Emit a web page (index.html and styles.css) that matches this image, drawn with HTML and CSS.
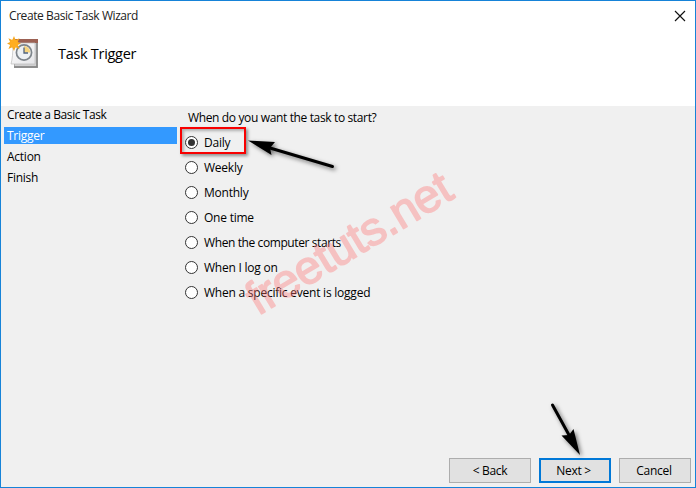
FILE: index.html
```html
<!DOCTYPE html>
<html lang="en">
<head>
<meta charset="utf-8">
<title>Create Basic Task Wizard</title>
<link rel="stylesheet" href="styles.css">
</head>
<body>
<main class="window">
  <header class="header">
    <div class="titlebar">
      <span class="caption">Create Basic Task Wizard</span>
      <svg class="close" width="12" height="12" viewBox="0 0 12 12"><path d="M1 1L11 11M11 1L1 11" stroke="#111" stroke-width="1.15"/></svg>
    </div>
    <div class="heading">
      <svg class="task-icon" width="34" height="34" viewBox="0 0 34 34">
        <defs>
          <linearGradient id="page" x2="1" y2="1"><stop stop-color="#fff"/><stop offset="1" stop-color="#e5e5e8"/></linearGradient>
        </defs>
        <path d="M7 6H31V32H7Z" fill="#aaa"/>
        <path d="M8 7H29V30H8Z" fill="#d0d0d1"/>
        <path d="M8 3H31V7H8Z" fill="#9c6153"/>
        <path d="M7 7H28V28H4Q6 21 6 7Z" fill="url(#page)" stroke="#bbb" stroke-width=".7"/>
        <path d="M30 7V31H7" fill="none" stroke="#858585" stroke-width="1.4"/>
        <circle cx="17" cy="16.5" r="7.6" fill="#edf1f4" stroke="#7e858b" stroke-width="1.7"/>
        <path d="M17 16.500V10A6.400 6.400 0 0 1 23.200 16.500Z" fill="#f6d47e"/>
        <path d="M17 11.500V17H21" fill="none" stroke="#50647c" stroke-width="1.3"/>
        <path d="M7 0L8.500 4L12.500 2.200L10.700 6L14 7.500L10.700 9L12.500 13L8.500 11.300L7 15L5.300 11.300L1.400 13L3.100 9L0 7.500L3.100 6L1.400 2.200L5.300 4Z" fill="#f6a61e"/>
        <circle cx="7" cy="7.500" r="4" fill="#ffae22"/>
      </svg>
      <h1>Task Trigger</h1>
    </div>
  </header>
  <div class="body">
    <nav class="steps">
      <div class="step">Create a Basic Task</div>
      <div class="step active">Trigger</div>
      <div class="step">Action</div>
      <div class="step">Finish</div>
    </nav>
    <section class="options">
      <p class="question">When do you want the task to start?</p>
      <div class="option"><i class="radio checked"></i><span>Daily</span></div>
      <div class="option"><i class="radio"></i><span>Weekly</span></div>
      <div class="option"><i class="radio"></i><span>Monthly</span></div>
      <div class="option"><i class="radio"></i><span>One time</span></div>
      <div class="option"><i class="radio"></i><span class="tight">When the computer starts</span></div>
      <div class="option"><i class="radio"></i><span>When I log on</span></div>
      <div class="option"><i class="radio"></i><span>When a specific event is logged</span></div>
    </section>
  </div>
  <footer class="footer">
    <div class="button back">&lt; Back</div>
    <div class="button next">Next &gt;</div>
    <div class="button cancel">Cancel</div>
  </footer>
</main>
<div class="highlight"></div>
<svg class="annotations" width="696" height="488" viewBox="0 0 696 488">
  <text class="watermark" transform="translate(258 316) rotate(-31)" textLength="231">freetuts.net</text>
  <g class="arrows">
    <path d="M332.500 166.500L270 148" stroke="#000" stroke-width="3" stroke-linecap="round"/>
    <path d="M248 140.500L275 142L270 148L271.500 155Z"/>
    <path d="M552.500 405L569 435" stroke="#000" stroke-width="3" stroke-linecap="round"/>
    <path d="M580 455L561.500 435.500L569 435L573.500 429Z"/>
  </g>
</svg>
</body>
</html>
```
FILE: styles.css
```css
* { box-sizing: border-box; }
body { margin: 0; font: 12px/16px "Open Sans", "Noto Sans", sans-serif; letter-spacing: -.23px; color: #000; }
.window { width: 696px; height: 488px; display: flex; flex-direction: column; border: 1px solid #1683d8; background: #f0f0f0; }
.header { height: 105px; background: #fff; }
.titlebar { height: 30px; display: flex; align-items: center; justify-content: space-between; padding: 0 9px 0 8px; }
.caption { letter-spacing: -.42px; color: #222; }
.heading { display: flex; align-items: center; padding: 5px 0 0 6px; }
h1 { margin: 2px 0 0 17px; font-size: 14.5px; line-height: 20px; font-weight: 400; letter-spacing: -.3px; }
.body { display: flex; flex: 1; }
.steps { width: 176px; padding-left: 3px; }
.step { height: 17px; margin-bottom: 4px; padding-left: 3px; display: flex; align-items: center; letter-spacing: -.4px; }
.active { background: #3399ff; color: #fff; }
.step:not(:first-child) { letter-spacing: -.25px; }
.options { padding: 4px 0 0 8px; }
.question { margin: 0 0 4px 3px; letter-spacing: -.36px; }
.option { height: 25px; display: flex; align-items: center; gap: 6px; }
.tight { letter-spacing: -.4px; }
.radio { width: 13px; height: 13px; border: 1px solid #333; border-radius: 50%; background: #fff; display: grid; place-items: center; }
.checked::after { content: ""; width: 7px; height: 7px; border-radius: 50%; background: #333; }
.footer { height: 29px; display: flex; padding-left: 448px; }
.button { height: 25px; display: flex; align-items: center; justify-content: center; border: 1px solid #adadad; background: #e1e1e1; letter-spacing: -.3px; }
.back { width: 82px; margin-right: 8px; }
.next { width: 72px; margin-right: 8px; padding-right: 3px; border: 2px solid #0078d7; }
.cancel { width: 72px; padding-right: 2px; }
.highlight { position: absolute; left: 180px; top: 127px; width: 66px; height: 27px; border: 2px solid #f80000; box-shadow: 2px 2px 3px #0006, inset 2px 2px 3px #0004; }
.annotations { position: absolute; left: 0; top: 0; }
.watermark { font: 47px "Liberation Sans", sans-serif; letter-spacing: 0; fill: #ff7777; stroke: #ff7777; stroke-width: 1.6; stroke-linejoin: round; opacity: .38; }
.arrows { filter: drop-shadow(2px 2px 2px #0008); }
```
